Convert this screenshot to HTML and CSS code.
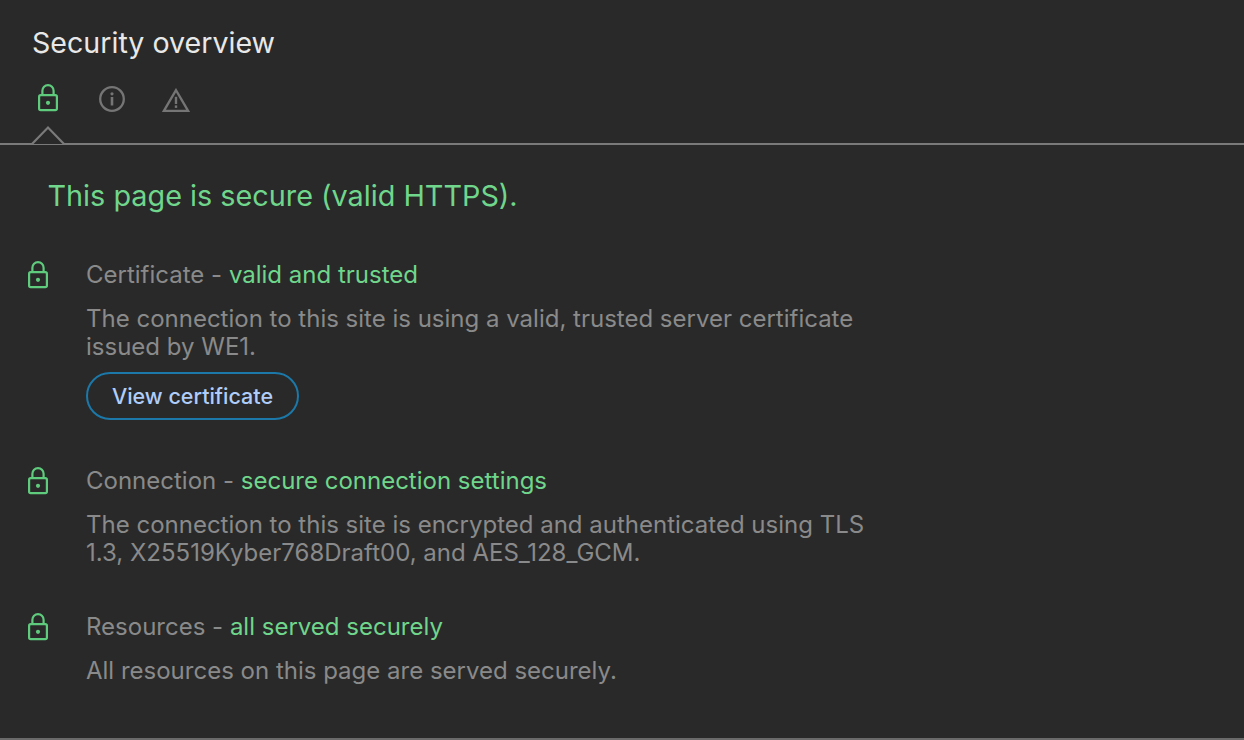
FILE: index.html
```html
<!DOCTYPE html>
<html lang="en">
<head>
<meta charset="utf-8">
<title>Security overview</title>
<link rel="stylesheet" href="styles.css">
</head>
<body>
<svg class="defs" width="0" height="0" aria-hidden="true">
  <symbol id="lock" viewBox="0 0 20 28">
    <path d="M4.4 11.2V6.8a5.6 5.6 0 0 1 11.2 0V11.2" fill="none" stroke="currentColor" stroke-width="2.2"/>
    <rect x="1.1" y="11.2" width="17.8" height="15" rx="1.6" fill="none" stroke="currentColor" stroke-width="2.2"/>
    <circle cx="10" cy="18.8" r="2.1" fill="currentColor"/>
  </symbol>
</svg>
<main class="panel">
  <header class="head">
    <h1 class="title">Security overview</h1>
    <nav class="tabs">
      <svg class="tab tab-lock"><use href="#lock"/></svg>
      <svg class="tab tab-info" viewBox="0 0 26 26">
        <circle cx="13" cy="13" r="11.8" fill="none" stroke="currentColor" stroke-width="2.3"/>
        <circle cx="13" cy="7.8" r="1.6" fill="currentColor"/>
        <rect x="11.7" y="11" width="2.6" height="8.5" fill="currentColor"/>
      </svg>
      <svg class="tab tab-warn" viewBox="0 0 28 24">
        <path d="M14 2.2 1.9 22.8h24.2Z" fill="none" stroke="currentColor" stroke-width="2.3"/>
        <rect x="12.8" y="8.8" width="2.4" height="7.2" fill="currentColor"/>
        <rect x="12.8" y="17.4" width="2.4" height="2.5" fill="currentColor"/>
      </svg>
    </nav>
    <svg class="notch" viewBox="0 0 34 19"><path d="M0 18h1L17 1.6 33 18h1" fill="#292929" stroke="#7a7a7a" stroke-width="2.2"/></svg>
  </header>
  <h2 class="summary">This page is secure (valid HTTPS).</h2>
  <section class="item item-cert">
    <svg class="item-icon"><use href="#lock"/></svg>
    <div class="item-body">
      <div class="item-title">Certificate - <span class="ok">valid and trusted</span></div>
      <p class="item-text">The connection to this site is using a valid, trusted server certificate<br>issued by WE1.</p>
      <button class="btn" type="button">View certificate</button>
    </div>
  </section>
  <section class="item item-conn">
    <svg class="item-icon"><use href="#lock"/></svg>
    <div class="item-body">
      <div class="item-title">Connection - <span class="ok">secure connection settings</span></div>
      <p class="item-text">The connection to this site is encrypted and authenticated using TLS<br>1.3, X25519Kyber768Draft00, and AES_128_GCM.</p>
    </div>
  </section>
  <section class="item item-res">
    <svg class="item-icon"><use href="#lock"/></svg>
    <div class="item-body">
      <div class="item-title">Resources - <span class="ok">all served securely</span></div>
      <p class="item-text">All resources on this page are served securely.</p>
    </div>
  </section>
</main>
</body>
</html>
```
FILE: styles.css
```css
* { box-sizing: border-box; }
html, body { margin: 0; height: 100%; }
body {
  background: #292929;
  font-family: Inter, "Liberation Sans", sans-serif;
  overflow: hidden;
}
.defs { position: absolute; }
.panel {
  height: 740px;
  border-bottom: 2px solid #6a6a6a;
}
.head {
  position: relative;
  height: 145px;
  border-bottom: 2px solid #7a7a7a;
  padding: 25px 0 0 32px;
}
.title {
  margin: 0;
  font-size: 28.6px;
  line-height: 36px;
  font-weight: 400;
  color: #e8e8e8;
}
.tabs {
  display: flex;
  align-items: flex-end;
  margin-top: 21px;
  height: 30px;
  padding-left: 6px;
}
.tab { display: block; }
.tab-lock { width: 20px; height: 28px; color: #5fcb7d; }
.tab-info { width: 26px; height: 26px; margin-left: 41px; color: #757575; }
.tab-warn { width: 28px; height: 24px; margin-left: 37px; color: #757575; }
.notch {
  position: absolute;
  left: 31px;
  top: 126px;
  width: 34px;
  height: 19px;
}
.summary {
  margin: 33px 0 0 47.5px;
  font-size: 28.8px;
  line-height: 36px;
  font-weight: 400;
  color: #6fd68c;
}
.item {
  display: flex;
  padding-left: 28px;
}
.item-cert { margin-top: 47px; }
.item-conn { margin-top: 47px; }
.item-res { margin-top: 46px; }
.item-icon {
  width: 20px;
  height: 28px;
  flex: none;
  color: #5fcb7d;
}
.item-body { margin-left: 38px; }
.item-title {
  font-size: 24px;
  line-height: 28px;
  color: #8a8a8a;
}
.ok { color: #6fd68c; }
.item-text {
  margin: 16px 0 0;
  font-size: 24px;
  line-height: 28px;
  color: #8a8a8a;
}
.btn {
  display: block;
  margin-top: 11px;
  width: 213px;
  height: 48px;
  padding: 0;
  border: 2px solid #1b78a8;
  border-radius: 24px;
  background: transparent;
  color: #afcdfa;
  font: 500 21.5px Inter, "Liberation Sans", sans-serif;
}
```
